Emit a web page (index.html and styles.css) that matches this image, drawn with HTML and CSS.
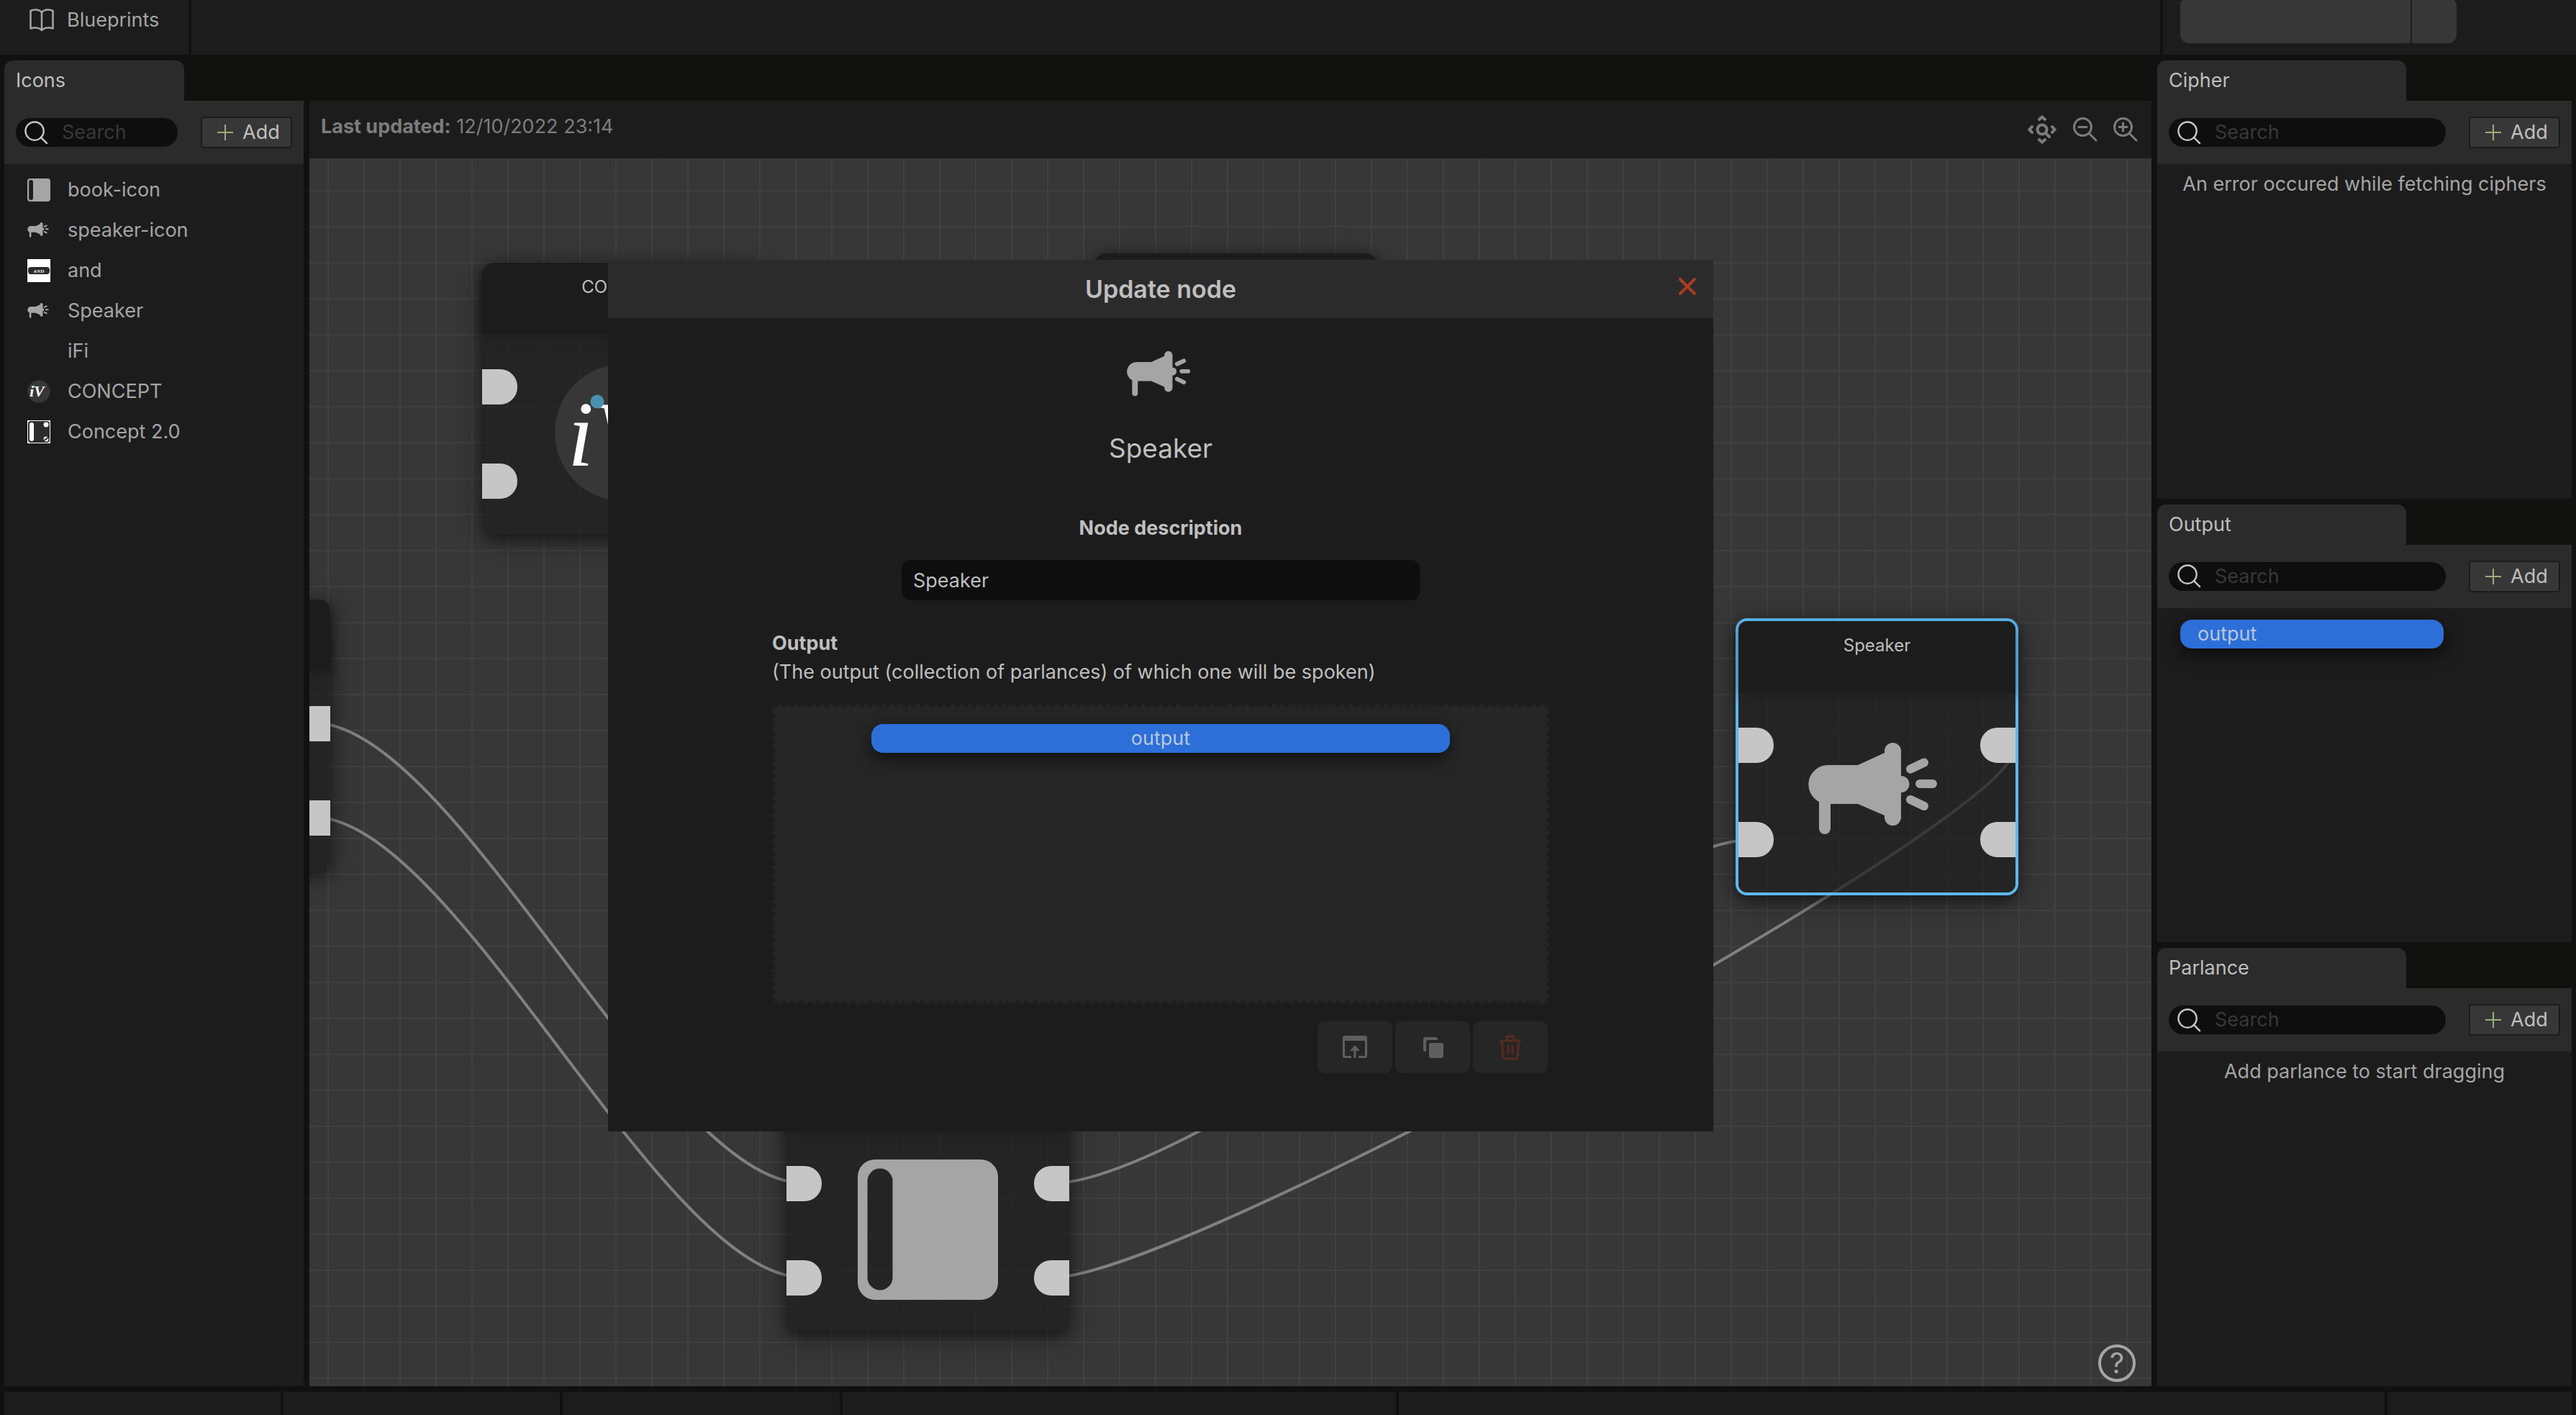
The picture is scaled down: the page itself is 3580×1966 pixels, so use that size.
FILE: index.html
```html
<!DOCTYPE html>
<html lang="en">
<head>
<meta charset="utf-8">
<title>Blueprints</title>
<link rel="stylesheet" href="styles.css">
</head>
<body>
<svg class="sprite" aria-hidden="true">
  <symbol id="speaker" viewBox="0 0 195 195">
    <path fill="currentColor" d="M29 61H71L108 44V41.500a11.500 11.500 0 0 1 23 0V76a11.500 11.500 0 0 1 0 23V133.500a11.500 11.500 0 0 1-23 0V131L71 115H33V149a8 8 0 0 1-16 0V112A27 27 0 0 1 29 61Z"/>
    <path fill="none" stroke="currentColor" stroke-width="12" stroke-linecap="round" d="M144 66.500L163 57.500M157 87H175M144 109L163 118"/>
  </symbol>
  <symbol id="book" viewBox="0 0 195 195">
    <path fill="currentColor" fill-rule="evenodd" d="M24 0H171a24 24 0 0 1 24 24V171a24 24 0 0 1-24 24H24a24 24 0 0 1-24-24V24a24 24 0 0 1 24-24ZM31 12.500a17.500 17.500 0 0 0-17.500 17.500V164a17.500 17.500 0 0 0 35 0V30a17.500 17.500 0 0 0-17.500-17.500Z"/>
  </symbol>
  <symbol id="search" viewBox="0 0 34 34">
    <g fill="none" stroke="currentColor" stroke-width="2.500" stroke-linecap="round"><circle cx="14.500" cy="14.500" r="13"/><path d="M23.500 23.500L32 32"/></g>
  </symbol>
  <symbol id="plus" viewBox="0 0 22 22">
    <path fill="none" stroke="currentColor" stroke-width="2" d="M11 0V22M0 11H22"/>
  </symbol>
</svg>

<header class="topbar">
  <nav class="topbar-nav">
    <a class="nav-link" href="#blueprints">
      <svg class="nav-icon" viewBox="0 0 34 32" aria-hidden="true"><path fill="none" stroke="currentColor" stroke-width="2.500" stroke-linejoin="round" d="M17 5C13 1 7 1 1.500 3V27.500C7 26 13 26 17 30C21 26 27 26 32.500 27.500V3C27 1 21 1 17 5ZM17 5V30"/></svg>
      <span>Blueprints</span>
    </a>
  </nav>
  <div class="topbar-fill"></div>
  <div class="topbar-actions">
    <div class="split">
      <button class="split-main" type="button" aria-label="Run"></button>
      <button class="split-more" type="button" aria-label="More"></button>
    </div>
  </div>
</header>

<main class="workspace">
  <section class="panel">
    <h2 class="tab tab-narrow">Icons</h2>
    <div class="panel-tools">
      <label class="search"><svg class="search-icon" aria-hidden="true"><use href="#search"/></svg><input type="search" placeholder="Search" aria-label="Search icons"></label>
      <button class="add" type="button"><svg class="plus" aria-hidden="true"><use href="#plus"/></svg>Add</button>
    </div>
    <div class="panel-body">
      <ul class="icon-list">
        <li><svg class="thumb"><use href="#book"/></svg>book-icon</li>
        <li><svg class="thumb"><use href="#speaker"/></svg>speaker-icon</li>
        <li><svg class="thumb" viewBox="0 0 32 32"><path fill="#fff" d="M0 0H32V32H0Z"/><rect x="1" y="11" width="30" height="10" rx="4" fill="#2b2b2b"/><text x="16" y="19" text-anchor="middle" class="logo-text logo-bold" font-size="7">AND</text></svg>and</li>
        <li><svg class="thumb"><use href="#speaker"/></svg>Speaker</li>
        <li><span class="thumb"></span>iFi</li>
        <li><svg class="thumb" viewBox="0 0 195 195"><circle cx="97" cy="97" r="95" fill="#373737"/><circle cx="59" cy="54" r="9.500" fill="#4a90b0"/><text x="20" y="143" class="logo-text logo-bold" font-size="130">iV</text></svg>CONCEPT</li>
        <li><svg class="thumb" viewBox="0 0 32 32"><path fill="#fff" d="M0 0H32V32H0Z"/><rect x="1" y="1" width="30" height="30" rx="4" fill="#2b2b2b"/><rect x="3" y="3" width="6" height="26" rx="3" fill="#fff"/><circle cx="26" cy="6" r="3.500" fill="#fff"/><circle cx="26" cy="26" r="3.500" fill="#fff"/><path stroke="#2b2b2b" stroke-width="2" d="M22 29L30 23"/></svg>Concept 2.0</li>
      </ul>
    </div>
  </section>

  <section class="canvas">
    <svg class="wires" aria-hidden="true">
      <path d="M4 864C204 864 488 1504 688 1504"/>
      <path d="M4 995C204 995 488 1635 688 1635"/>
      <path d="M1032 1504C1232 1504 1810 1026 2010 1026"/>
      <path d="M1032 1635C1232 1635 2546 895 2346 895"/>
    </svg>

    <article class="node node-source">
      <h3 class="node-title"></h3>
      <div class="node-body">
        <div class="ports"><i class="port"></i><i class="port"></i></div>
        <div class="ports ports-out"><i class="port"></i><i class="port"></i></div>
      </div>
    </article>
    <article class="node node-concept">
      <h3 class="node-title">CONCEPT</h3>
      <div class="node-body">
        <div class="ports"><i class="port"></i><i class="port"></i></div>
        <svg class="node-icon" viewBox="0 0 195 195"><circle cx="97" cy="97" r="95" fill="#373737"/><text x="20" y="143" class="logo-text" font-size="130">iV</text><circle cx="61" cy="54" r="9.500" fill="#4a90b0"/></svg>
        <div class="ports ports-out"><i class="port"></i><i class="port"></i></div>
      </div>
    </article>
    <article class="node node-hidden">
      <h3 class="node-title"></h3>
      <div class="node-body"></div>
    </article>
    <article class="node node-book">
      <h3 class="node-title"></h3>
      <div class="node-body">
        <div class="ports"><i class="port"></i><i class="port"></i></div>
        <svg class="node-icon"><use href="#book"/></svg>
        <div class="ports ports-out"><i class="port"></i><i class="port"></i></div>
      </div>
    </article>
    <article class="node node-speaker is-selected">
      <h3 class="node-title">Speaker</h3>
      <div class="node-body">
        <div class="ports"><i class="port"></i><i class="port"></i></div>
        <svg class="node-icon"><use href="#speaker"/></svg>
        <div class="ports ports-out"><i class="port"></i><i class="port"></i></div>
      </div>
    </article>

    <div class="canvas-bar">
      <p class="updated"><strong>Last updated:</strong> 12/10/2022 23:14</p>
      <button class="tool" type="button" aria-label="Fit to view"><svg viewBox="0 0 40 40"><g fill="none" stroke="currentColor" stroke-width="4" stroke-linecap="round"><circle cx="20" cy="20" r="6.500"/><path d="M25 25L30 30M16 6L20 2.500L24 6M16 34L20 37.500L24 34M6 16L2.500 20L6 24M34 16L37.500 20L34 24"/></g></svg></button>
      <button class="tool" type="button" aria-label="Zoom out"><svg viewBox="0 0 40 40"><g fill="none" stroke="currentColor" stroke-width="3" stroke-linecap="round"><circle cx="16.500" cy="16.500" r="12"/><path d="M25.500 25.500L35 35M11 16.500H22"/></g></svg></button>
      <button class="tool" type="button" aria-label="Zoom in"><svg viewBox="0 0 40 40"><g fill="none" stroke="currentColor" stroke-width="3" stroke-linecap="round"><circle cx="16.500" cy="16.500" r="12"/><path d="M25.500 25.500L35 35M11 16.500H22M16.500 11V22"/></g></svg></button>
    </div>

    <button class="help" type="button">?</button>

    <div class="modal" role="dialog" aria-labelledby="modal-title">
      <div class="modal-head">
        <h2 class="modal-title" id="modal-title">Update node</h2>
        <button class="modal-close" type="button" aria-label="Close"><svg viewBox="0 0 26 26"><path fill="none" stroke="currentColor" stroke-width="4" stroke-linecap="round" d="M3 3L23 23M23 3L3 23"/></svg></button>
      </div>
      <form class="modal-form">
        <svg class="modal-icon"><use href="#speaker"/></svg>
        <p class="modal-name">Speaker</p>
        <label class="field-label" for="description">Node description</label>
        <input class="field" id="description" type="text" value="Speaker">
        <div class="output-label"><strong>Output</strong><span>(The output (collection of parlances) of which one will be spoken)</span></div>
        <div class="dropzone"><span class="pill pill-center">output</span></div>
        <div class="actions">
          <button class="action" type="button" aria-label="Open"><svg viewBox="0 0 36 36"><path fill="currentColor" fill-rule="evenodd" d="M4 2H32a3 3 0 0 1 3 3V30a3 3 0 0 1-3 3H23V30H32V9H4V30H13V33H4a3 3 0 0 1-3-3V5a3 3 0 0 1 3-3ZM18 15L25 23H19.500V33H16.500V23H11Z"/></svg></button>
          <button class="action" type="button" aria-label="Duplicate"><svg viewBox="0 0 36 36"><rect x="13" y="12" width="20" height="21" rx="3" fill="currentColor"/><path fill="currentColor" d="M8 4H22a3 3 0 0 1 3 3V8H12a3 3 0 0 0-3 3V24H8a3 3 0 0 1-3-3V7a3 3 0 0 1 3-3Z"/></svg></button>
          <button class="action action-danger" type="button" aria-label="Delete"><svg viewBox="0 0 36 36"><path fill="none" stroke="currentColor" stroke-width="3" stroke-linejoin="round" d="M3 9H33M6 9L8 31a3 3 0 0 0 3 3H25a3 3 0 0 0 3-3L30 9M13 9V3H23V9M15 15V28M21 15V28"/></svg></button>
        </div>
      </form>
    </div>
  </section>

  <div class="side">
    <section class="panel">
      <h2 class="tab">Cipher</h2>
      <div class="panel-tools">
        <label class="search"><svg class="search-icon" aria-hidden="true"><use href="#search"/></svg><input type="search" placeholder="Search" aria-label="Search ciphers"></label>
        <button class="add" type="button"><svg class="plus" aria-hidden="true"><use href="#plus"/></svg>Add</button>
      </div>
      <div class="panel-body"><p class="message">An error occured while fetching ciphers</p></div>
    </section>
    <section class="panel">
      <h2 class="tab">Output</h2>
      <div class="panel-tools">
        <label class="search"><svg class="search-icon" aria-hidden="true"><use href="#search"/></svg><input type="search" placeholder="Search" aria-label="Search outputs"></label>
        <button class="add" type="button"><svg class="plus" aria-hidden="true"><use href="#plus"/></svg>Add</button>
      </div>
      <div class="panel-body"><div class="pill-row"><span class="pill">output</span></div></div>
    </section>
    <section class="panel">
      <h2 class="tab">Parlance</h2>
      <div class="panel-tools">
        <label class="search"><svg class="search-icon" aria-hidden="true"><use href="#search"/></svg><input type="search" placeholder="Search" aria-label="Search parlances"></label>
        <button class="add" type="button"><svg class="plus" aria-hidden="true"><use href="#plus"/></svg>Add</button>
      </div>
      <div class="panel-body"><p class="message">Add parlance to start dragging</p></div>
    </section>
  </div>
</main>

<footer class="statusbar">
  <div></div><div></div><div></div><div></div><div></div><div></div>
</footer>
</body>
</html>
```

FILE: styles.css
```css
* { box-sizing: border-box; }

:root {
  --gap: #11110f;
  --surface: #1c1c1c;
  --raised: #2b2b2b;
  --control: #373737;
  --field: #0e0e0e;
  --text: #bfbfbf;
  --muted: #a5a5a5;
}

body {
  margin: 0;
  height: 100vh;
  display: grid;
  grid-template-rows: 76px minmax(0, 1fr) 32px;
  overflow: hidden;
  background: var(--gap);
  color: var(--text);
  font: 27px/40px Inter, "Liberation Sans", sans-serif;
}

h2, h3, p, ul { margin: 0; padding: 0; font-weight: 400; font-size: inherit; }
button, input { font: inherit; color: inherit; border: 0; padding: 0; margin: 0; background: none; outline: 0; }
svg { display: block; flex: none; }
.sprite { position: absolute; width: 0; height: 0; }
.logo-text { font-family: "Liberation Serif", serif; font-style: italic; font-weight: 400; fill: #fff; }
.logo-bold { font-weight: 700; }

/* Top bar */
.topbar { display: grid; grid-template-columns: 262px 1fr 574px; gap: 4px; overflow: hidden; }
.topbar > * { background: var(--surface); }
.nav-link { display: flex; align-items: center; gap: 18px; height: 56px; padding-left: 41px; color: var(--muted); text-decoration: none; }
.nav-icon { width: 34px; height: 32px; }
.split { display: flex; gap: 2px; width: 384px; height: 64px; margin: -4px 0 0 24px; border-radius: 12px; overflow: hidden; }
.split-main, .split-more { background: var(--control); }
.split-main { flex: 1; }
.split-more { width: 62px; }

/* Workspace */
.workspace { display: grid; grid-template-columns: 416px minmax(0, 1fr) 576px; gap: 8px; padding: 8px 6px; min-height: 0; }
.side { display: grid; grid-template-rows: repeat(3, minmax(0, 1fr)); gap: 8px; min-height: 0; }
.panel { display: flex; flex-direction: column; min-height: 0; }
.tab { width: 60%; height: 56px; padding-left: 16px; line-height: 56px; background: var(--raised); border-radius: 12px 12px 0 0; }
.panel-tools { display: flex; align-items: center; gap: 32px; padding: 22px 16px; background: var(--raised); }
.panel-body { flex: 1; background: var(--surface); color: var(--muted); }

.search { flex: 1; min-width: 0; display: flex; align-items: center; gap: 19px; height: 40px; padding: 0 12px; border-radius: 20px; background: var(--field); }
.search-icon { width: 33px; height: 33px; color: #c6c6c6; }
.search input { flex: 1; min-width: 0; width: 0; appearance: none; }
.search input::placeholder { color: #383838; opacity: 1; }
.add { display: flex; align-items: center; gap: 13px; width: 127px; height: 44px; padding-left: 21px; border: 2px solid var(--surface); border-radius: 4px; background: var(--control); }
.plus { width: 22px; height: 22px; color: #9aae7c; }

.icon-list { list-style: none; padding-top: 8px; }
.icon-list li { display: flex; align-items: center; gap: 24px; height: 56px; padding-left: 32px; }
.thumb { width: 32px; height: 32px; }
.message { padding-top: 8px; text-align: center; }

.pill-row { padding: 16px 178px 0 32px; }
.pill { display: block; height: 40px; padding: 0 24px; line-height: 40px; border-radius: 16px; background: #2c6fd9; color: #b8c6de; box-shadow: 0 8px 24px rgba(0, 0, 0, .6); }
.pill-center { width: 804px; text-align: center; }

/* Canvas */
.canvas {
  position: relative;
  margin-top: 56px;
  overflow: hidden;
  background-color: #373737;
  background-image: linear-gradient(90deg, #404040 2px, transparent 2px), linear-gradient(#404040 2px, transparent 2px);
  background-size: 50px 50px;
  background-position: 25px 24px;
}
.wires { position: absolute; left: 0; top: 0; width: 100%; height: 100%; overflow: visible; }
.wires path { fill: none; stroke: #808080; stroke-width: 4; }

.canvas-bar { position: absolute; top: 0; left: 0; right: 0; display: flex; align-items: center; gap: 16px; height: 80px; padding: 0 16px; background: rgba(26, 26, 26, .93); color: #7c7c7c; }
.updated { flex: 1; height: 80px; line-height: 72px; }
.updated strong { font-weight: 700; }
.tool { width: 40px; height: 40px; }
.tool:first-of-type { margin-right: 4px; }

.help { position: absolute; right: 22px; bottom: 6px; width: 52px; height: 52px; border: 4px solid var(--muted); border-radius: 50%; color: var(--muted); font-size: 40px; line-height: 44px; text-align: center; }

.node { position: absolute; width: 393px; border-radius: 16px; box-shadow: 0 8px 40px rgba(0, 0, 0, .35), 0 8px 16px rgba(0, 0, 0, .35); }
.node-title { height: 99px; padding-top: 16px; border-radius: 16px 16px 0 0; background: var(--surface); box-shadow: 0 6px 16px rgba(0, 0, 0, .4); font-size: 24px; line-height: 36px; text-align: center; }
.node-body { display: flex; justify-content: space-between; height: 278px; padding-top: 40px; border-radius: 0 0 16px 16px; background: rgba(28, 28, 28, .7); }
.ports { display: grid; align-content: start; gap: 82px; padding-top: 9px; }
.port { width: 49px; height: 49px; border-radius: 0 24px 24px 0; background: #c6c6c6; }
.ports-out .port { border-radius: 24px 0 0 24px; }
.node-icon { width: 195px; height: 195px; color: var(--muted); }
.node-source { left: -364px; top: 693px; }
.node-source .ports-out { margin-left: auto; }
.node-concept { left: 240px; top: 225px; }
.node-hidden { left: 1091px; top: 212px; }
.node-book { left: 663px; top: 1332px; }
.node-speaker { left: 1982px; top: 719px; }
.is-selected { border: 4px solid #5cb8f0; }
.is-selected .node-title { border-radius: 12px 12px 0 0; }
.is-selected .node-body { border-radius: 0 0 12px 12px; }

/* Modal */
.modal { position: absolute; left: 415px; top: 221px; width: 60%; background: var(--surface); }
.modal-head { position: relative; height: 81px; background: var(--raised); }
.modal-title { font-size: 34px; font-weight: 600; line-height: 82px; text-align: center; }
.modal-close { position: absolute; top: 24px; right: 23px; width: 26px; height: 26px; color: #a83c1c; }
.modal-form { display: flex; flex-direction: column; align-items: center; width: 1080px; margin: 0 auto; padding: 31px 0 81px; }
.modal-icon { width: 96px; height: 96px; color: var(--muted); }
.modal-name { margin-top: 30px; font-size: 37px; line-height: 48px; }
.field-label { margin-top: 67px; font-weight: 700; }
.field { width: 720px; height: 56px; margin-top: 24px; padding: 0 16px; border-radius: 12px; background: var(--field); }
.output-label { align-self: stretch; display: grid; margin-top: 40px; }
.output-label strong { font-weight: 700; }
.dropzone { align-self: stretch; display: flex; justify-content: center; height: 416px; margin-top: 25px; padding-top: 23px; border: 4px dashed #1f1f1f; border-radius: 4px; background: #262626; }
.actions { align-self: flex-end; display: flex; gap: 4px; margin-top: 24px; padding-right: 2px; }
.action { display: grid; place-items: center; width: 104px; height: 72px; border-radius: 10px; background: #262626; color: #5f5f5f; }
.action svg { width: 36px; height: 36px; }
.action-danger { color: #562a1f; }

/* Status bar */
.statusbar { display: grid; grid-template-columns: 384px 384px 385px 769px 1fr 256px; gap: 4px; padding: 0 6px; }
.statusbar div { background: var(--surface); }
```
